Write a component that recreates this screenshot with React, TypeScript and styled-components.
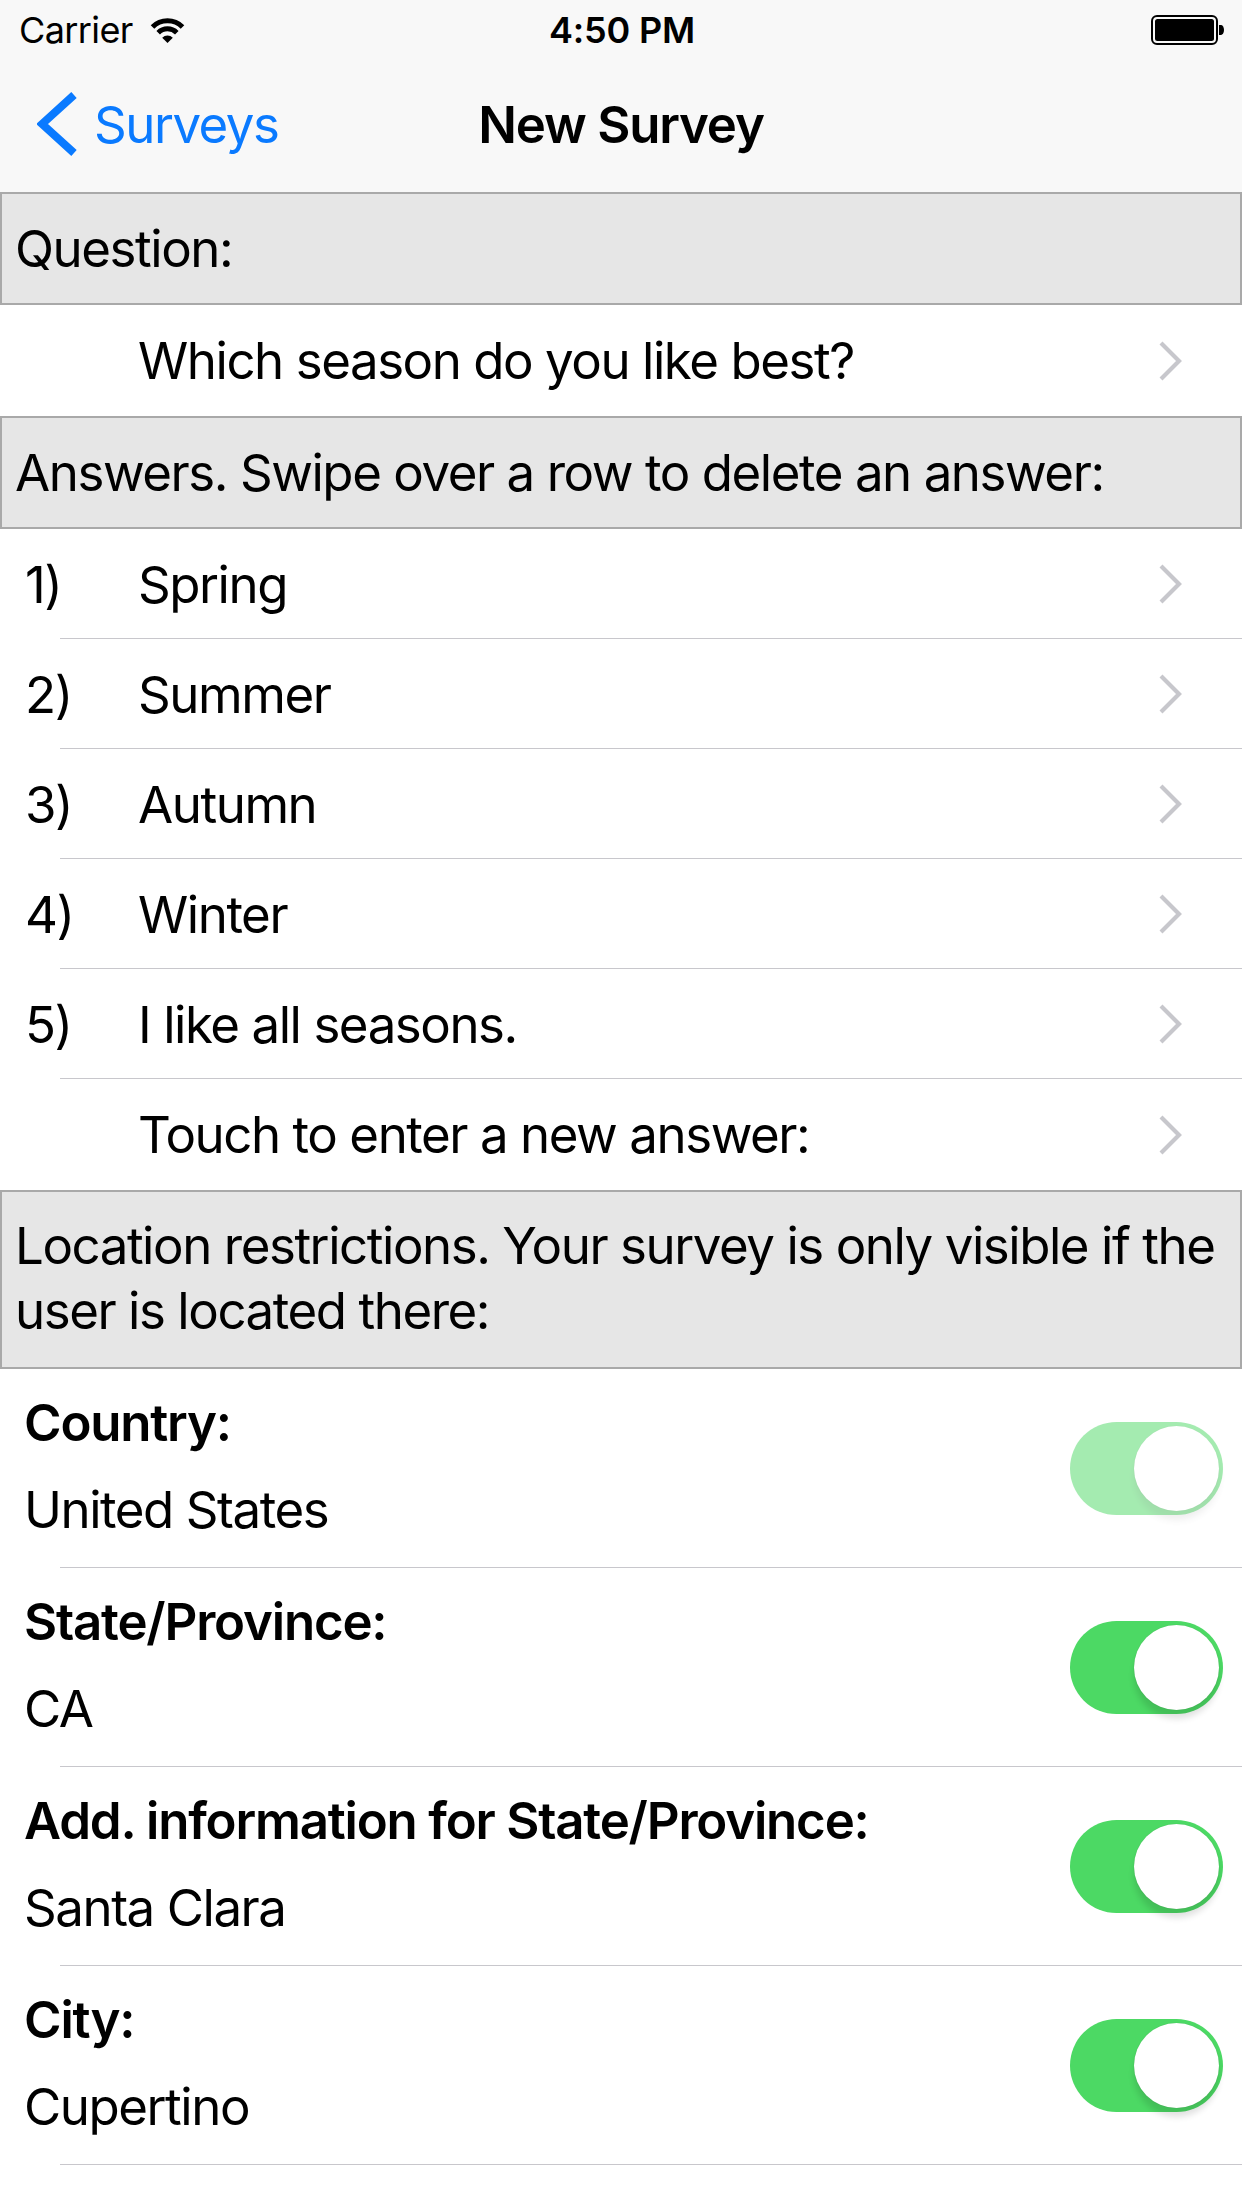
import React from "react";
import styled, { createGlobalStyle } from "styled-components";

const GlobalStyle = createGlobalStyle`
  html, body { margin: 0; padding: 0; background: #ffffff; }
  body { font-family: Inter, "Noto Sans", "Liberation Sans", sans-serif; color: #000; -webkit-font-smoothing: antialiased; }
  * { box-sizing: border-box; }
`;

const Screen = styled.div`
  width: 1242px;
  min-height: 2208px;
  background: #fff;
  display: flex;
  flex-direction: column;
`;

const TopBars = styled.div`
  background: #f8f8f8;
  display: flex;
  flex-direction: column;
`;

const StatusBar = styled.div`
  height: 60px;
  display: grid;
  grid-template-columns: 1fr auto 1fr;
  align-items: center;
  padding: 0 17px 0 19px;
  font-size: 36px;
  letter-spacing: -0.6px;
`;

const StatusLeft = styled.div`
  display: flex;
  align-items: center;
  gap: 16px;
`;

const StatusTime = styled.div`
  font-weight: 600;
  letter-spacing: -0.2px;
`;

const StatusRight = styled.div`
  display: flex;
  justify-content: flex-end;
  align-items: center;
`;

const NavBar = styled.div`
  height: 132px;
  display: grid;
  grid-template-columns: 1fr auto 1fr;
  align-items: center;
  padding-bottom: 4px;
`;

const BackButton = styled.div`
  display: flex;
  align-items: center;
  gap: 17px;
  margin-left: 37px;
  color: #0a7aff;
  font-size: 51px;
  letter-spacing: -1.5px;
`;

const NavTitle = styled.div`
  font-size: 51px;
  font-weight: 600;
  letter-spacing: -1.2px;
`;

const SectionHeader = styled.div<{ $multi?: boolean }>`
  background: #e6e6e6;
  border: 2px solid #a9a9a9;
  min-height: ${(p) => (p.$multi ? "179px" : "113px")};
  padding: ${(p) => (p.$multi ? "14px 10px 18px 13px" : "0 10px 0 13px")};
  display: flex;
  align-items: center;
  font-size: 51px;
  line-height: ${(p) => (p.$multi ? "65px" : "1.2")};
  letter-spacing: -1.45px;
`;

const Row = styled.div<{ $height: number; $last?: boolean }>`
  position: relative;
  height: ${(p) => p.$height}px;
  display: flex;
  align-items: center;
  padding: 0 59px 0 25px;
  font-size: 51px;
  letter-spacing: -1.45px;
  &::after {
    content: "";
    display: ${(p) => (p.$last ? "none" : "block")};
    position: absolute;
    left: 60px;
    right: 0;
    bottom: 0;
    height: 1px;
    background: #c8c7cc;
  }
`;

const RowNumber = styled.div`
  width: 113px;
  flex: none;
`;

const RowText = styled.div`
  flex: 1;
  white-space: nowrap;
`;

const ToggleRow = styled.div`
  position: relative;
  height: 199px;
  display: flex;
  align-items: center;
  padding: 0 19px 1px 24px;
  &::after {
    content: "";
    position: absolute;
    left: 60px;
    right: 0;
    bottom: 0;
    height: 1px;
    background: #c8c7cc;
  }
`;

const ToggleTexts = styled.div`
  flex: 1;
  display: flex;
  flex-direction: column;
  gap: 27px;
  padding-bottom: 4px;
`;

const ToggleLabel = styled.div`
  font-size: 51px;
  font-weight: 600;
  line-height: 60px;
  letter-spacing: -1.2px;
`;

const ToggleValue = styled.div`
  font-size: 51px;
  line-height: 60px;
  letter-spacing: -1.45px;
`;

const SwitchTrack = styled.div<{ $dim?: boolean }>`
  width: 153px;
  height: 93px;
  border-radius: 47px;
  background: #4cd964;
  opacity: ${(p) => (p.$dim ? 0.5 : 1)};
  display: flex;
  justify-content: flex-end;
  align-items: center;
  padding: 0 4px;
  flex: none;
`;

const SwitchKnob = styled.div`
  width: 85px;
  height: 85px;
  border-radius: 50%;
  background: #fff;
  box-shadow: 0 9px 6px rgba(0, 0, 0, 0.12), 0 0 1px rgba(0, 0, 0, 0.2);
`;

const Chevron = () => (
  <svg width="24" height="40" viewBox="0 0 24 40">
    <polyline points="2,2 20,20 2,38" fill="none" stroke="#c7c7cc" strokeWidth="4.2" />
  </svg>
);

const BackChevron = () => (
  <svg width="40" height="64" viewBox="0 0 40 64">
    <polyline points="37,3 5,32 37,61" fill="none" stroke="#0a7aff" strokeWidth="8" />
  </svg>
);

const Wifi = () => (
  <svg width="37" height="28" viewBox="0 0 37 28">
    <path d="M3.5 11 A21.2 21.2 0 0 1 33.5 11" fill="none" stroke="#000" strokeWidth="5" />
    <path d="M9.2 16.7 A13.2 13.2 0 0 1 27.8 16.7" fill="none" stroke="#000" strokeWidth="5" />
    <path d="M18.5 27 L13.2 21.7 A7.5 7.5 0 0 1 23.8 21.7 Z" fill="#000" />
  </svg>
);

const Battery = () => (
  <svg width="74" height="30" viewBox="0 0 74 30">
    <rect x="1" y="1" width="65" height="28" rx="5" fill="none" stroke="#000" strokeWidth="2" />
    <rect x="4" y="4" width="59" height="22" rx="2.5" fill="#000" />
    <path d="M68 10 h2 a3 5 0 0 1 0 10 h-2 Z" fill="#000" />
  </svg>
);

const Switch = ({ dim }: { dim?: boolean }) => (
  <SwitchTrack $dim={dim}>
    <SwitchKnob />
  </SwitchTrack>
);

const answers = ["Spring", "Summer", "Autumn", "Winter", "I like all seasons."];

const toggles = [
  { label: "Country:", value: "United States", dim: true },
  { label: "State/Province:", value: "CA" },
  { label: "Add. information for State/Province:", value: "Santa Clara" },
  { label: "City:", value: "Cupertino" },
];

export default function App() {
  return (
    <>
      <GlobalStyle />
      <Screen>
        <TopBars>
          <StatusBar>
            <StatusLeft>
              <span>Carrier</span>
              <Wifi />
            </StatusLeft>
            <StatusTime>4:50 PM</StatusTime>
            <StatusRight>
              <Battery />
            </StatusRight>
          </StatusBar>
          <NavBar>
            <BackButton>
              <BackChevron />
              <span>Surveys</span>
            </BackButton>
            <NavTitle>New Survey</NavTitle>
            <div />
          </NavBar>
        </TopBars>

        <SectionHeader>Question:</SectionHeader>
        <Row $height={111} $last>
          <RowNumber />
          <RowText>Which season do you like best?</RowText>
          <Chevron />
        </Row>

        <SectionHeader>Answers. Swipe over a row to delete an answer:</SectionHeader>
        {answers.map((a, i) => (
          <Row key={a} $height={110}>
            <RowNumber>{i + 1})</RowNumber>
            <RowText>{a}</RowText>
            <Chevron />
          </Row>
        ))}
        <Row $height={111} $last>
          <RowNumber />
          <RowText>Touch to enter a new answer:</RowText>
          <Chevron />
        </Row>

        <SectionHeader $multi>
          Location restrictions. Your survey is only visible if the user is located there:
        </SectionHeader>
        {toggles.map((t) => (
          <ToggleRow key={t.label}>
            <ToggleTexts>
              <ToggleLabel>{t.label}</ToggleLabel>
              <ToggleValue>{t.value}</ToggleValue>
            </ToggleTexts>
            <Switch dim={t.dim} />
          </ToggleRow>
        ))}
      </Screen>
    </>
  );
}
